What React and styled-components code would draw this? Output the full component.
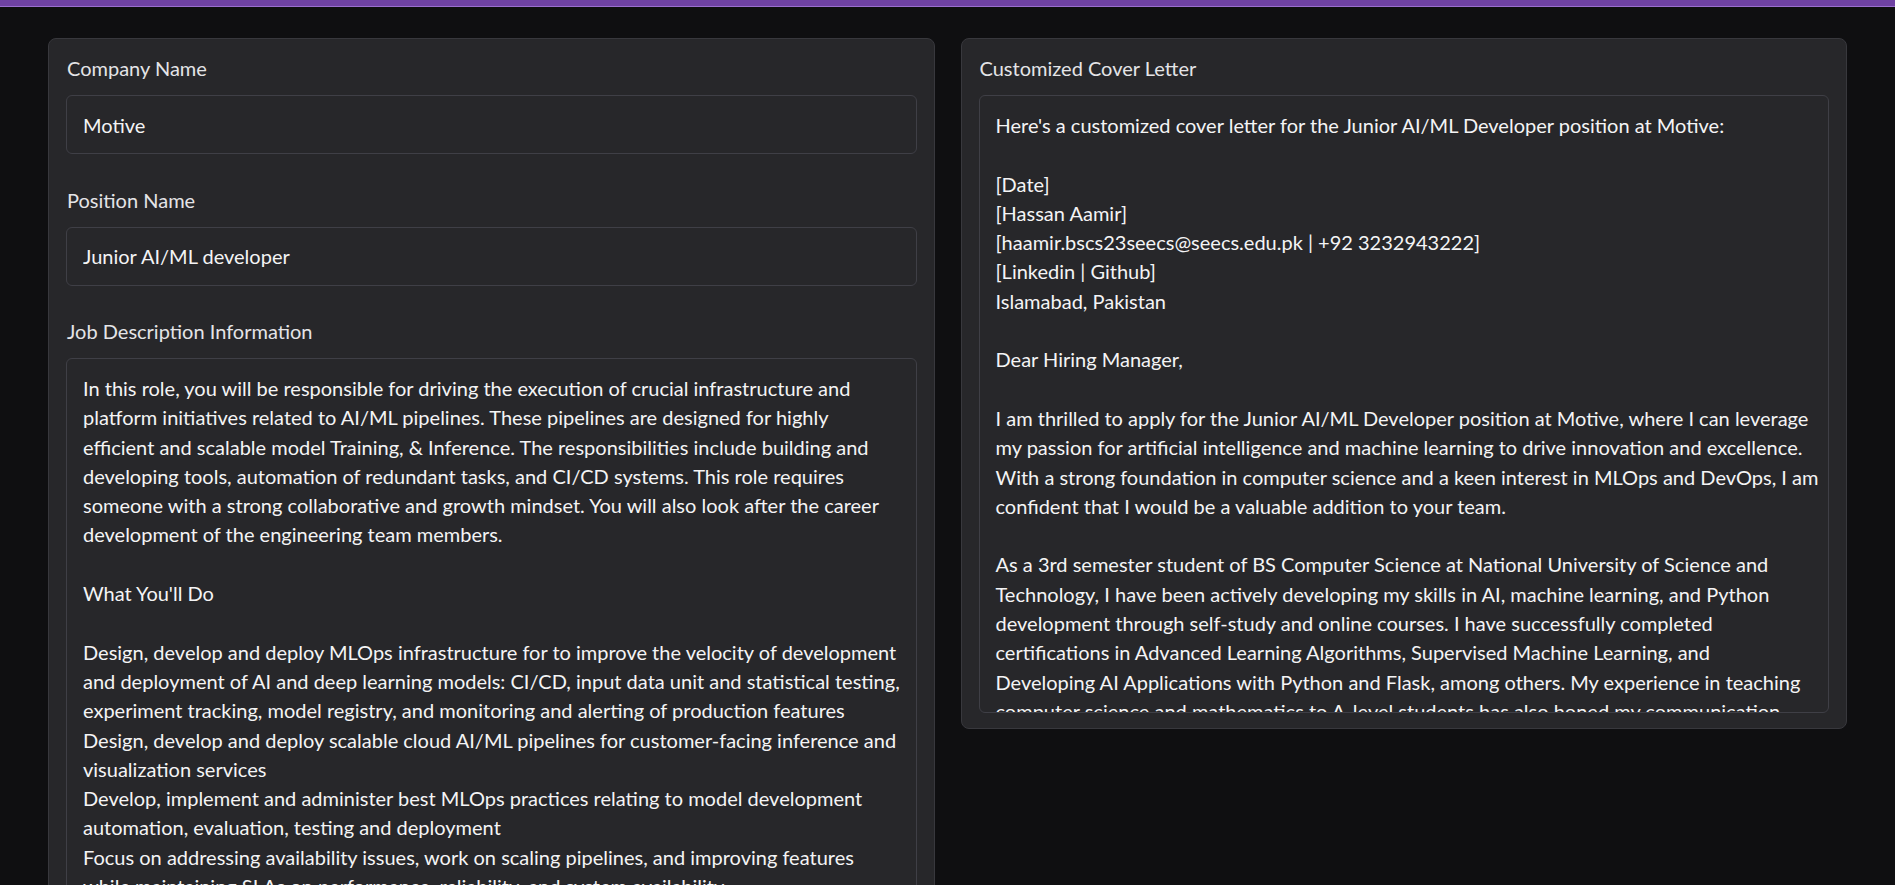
import React from 'react';
import styled, {createGlobalStyle} from 'styled-components';

const GlobalStyle = createGlobalStyle`
  html, body {
    margin: 0;
    height: 100%;
    overflow: hidden;
    background-color: #0f0f11;
    font-family: Lato, 'Liberation Sans', sans-serif;
  }
`

const TopBar = styled.div`
  height: 6px;
  background-color: #6f42a3;
  border-bottom: 1px solid #9b6fcf;
`

const Main = styled.main`
  display: grid;
  grid-template-columns: 1fr 1fr;
  gap: 26px;
  align-items: start;
  padding: 31px 48px 0;
`

const Panel = styled.section`
  display: flex;
  flex-direction: column;
  gap: 31.5px;
  background-color: #27272a;
  border: 1px solid #38383d;
  border-radius: 8px;
  padding: 15px 17px 15px;
`

const Field = styled.label`
  display: flex;
  flex-direction: column;
`

const Label = styled.span`
  font-size: 20px;
  line-height: 29px;
  color: #e4e4e7;
  margin-bottom: 12px;
  padding-left: 1px;
`

const Input = styled.input`
  box-sizing: border-box;
  height: 59px;
  padding: 0 16px;
  background-color: #27272a;
  border: 1px solid #3f3f46;
  border-radius: 6px;
  color: #f4f4f5;
  font-family: inherit;
  font-size: 20px;
  outline: none;
`

const TextArea = styled.textarea`
  box-sizing: border-box;
  height: ${props => props.height}px;
  padding: 15px 16px;
  background-color: #27272a;
  border: 1px solid #3f3f46;
  border-radius: 6px;
  color: #f4f4f5;
  font-family: inherit;
  font-size: 20px;
  line-height: 29.3px;
  white-space: pre;
  overflow: hidden;
  resize: none;
  outline: none;
`

const jobDescription = [
  'In this role, you will be responsible for driving the execution of crucial infrastructure and',
  'platform initiatives related to AI/ML pipelines. These pipelines are designed for highly',
  'efficient and scalable model Training, & Inference. The responsibilities include building and',
  'developing tools, automation of redundant tasks, and CI/CD systems. This role requires',
  'someone with a strong collaborative and growth mindset. You will also look after the career',
  'development of the engineering team members.',
  '',
  "What You'll Do",
  '',
  'Design, develop and deploy MLOps infrastructure for to improve the velocity of development',
  'and deployment of AI and deep learning models: CI/CD, input data unit and statistical testing,',
  'experiment tracking, model registry, and monitoring and alerting of production features',
  'Design, develop and deploy scalable cloud AI/ML pipelines for customer-facing inference and',
  'visualization services',
  'Develop, implement and administer best MLOps practices relating to model development',
  'automation, evaluation, testing and deployment',
  'Focus on addressing availability issues, work on scaling pipelines, and improving features',
  'while maintaining SLAs on performance, reliability, and system availability',
].join('\n')

const coverLetter = [
  "Here's a customized cover letter for the Junior AI/ML Developer position at Motive:",
  '',
  '[Date]',
  '[Hassan Aamir]',
  '[haamir.bscs23seecs@seecs.edu.pk | +92 3232943222]',
  '[Linkedin | Github]',
  'Islamabad, Pakistan',
  '',
  'Dear Hiring Manager,',
  '',
  'I am thrilled to apply for the Junior AI/ML Developer position at Motive, where I can leverage',
  'my passion for artificial intelligence and machine learning to drive innovation and excellence.',
  'With a strong foundation in computer science and a keen interest in MLOps and DevOps, I am',
  'confident that I would be a valuable addition to your team.',
  '',
  'As a 3rd semester student of BS Computer Science at National University of Science and',
  'Technology, I have been actively developing my skills in AI, machine learning, and Python',
  'development through self-study and online courses. I have successfully completed',
  'certifications in Advanced Learning Algorithms, Supervised Machine Learning, and',
  'Developing AI Applications with Python and Flask, among others. My experience in teaching',
  'computer science and mathematics to A-level students has also honed my communication',
  'skills and my ability to explain complex concepts clearly.',
].join('\n')

function App() {
  return (
    <>
      <GlobalStyle />
      <TopBar />
      <Main>
        <Panel>
          <Field>
            <Label>Company Name</Label>
            <Input defaultValue="Motive" />
          </Field>
          <Field>
            <Label>Position Name</Label>
            <Input defaultValue="Junior AI/ML developer" />
          </Field>
          <Field>
            <Label>Job Description Information</Label>
            <TextArea height={620} defaultValue={jobDescription} />
          </Field>
        </Panel>
        <Panel>
          <Field>
            <Label>Customized Cover Letter</Label>
            <TextArea height={618} readOnly defaultValue={coverLetter} />
          </Field>
        </Panel>
      </Main>
    </>
  );
}

export default App;
